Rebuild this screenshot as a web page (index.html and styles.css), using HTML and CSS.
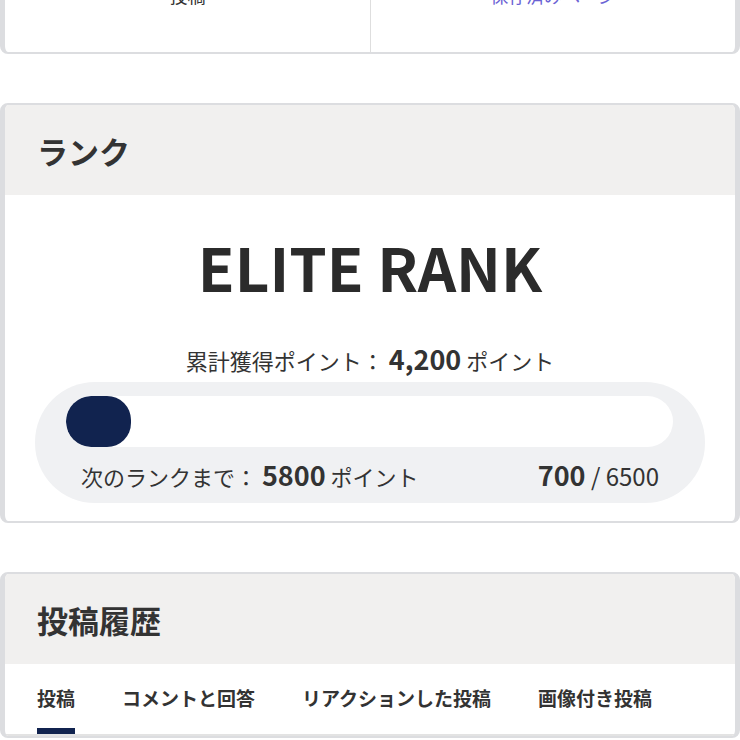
FILE: index.html
```html
<!DOCTYPE html>
<html lang="ja">
<head>
<meta charset="utf-8">
<link rel="stylesheet" href="styles.css">
</head>
<body>
<main class="page">
  <section class="card card-top">
    <div class="split">
      <div class="cell">
        <div class="cell-num">12</div>
        <div class="cell-label">投稿</div>
      </div>
      <div class="cell cell-right">
        <div class="cell-num">&nbsp;</div>
        <a class="cell-link" href="#">保存済みページ</a>
      </div>
    </div>
  </section>

  <section class="card">
    <header class="card-head"><h2>ランク</h2></header>
    <div class="rank-body">
      <div class="rank-name">ELITE RANK</div>
      <div class="rank-total">累計獲得ポイント： <b class="num">4,200</b> ポイント</div>
      <div class="progress">
        <div class="track"><div class="fill" style="width:65px"></div></div>
        <div class="labels">
          <span>次のランクまで： <b class="num">5800</b> ポイント</span>
          <span class="fraction"><b class="num">700</b> / 6500</span>
        </div>
      </div>
    </div>
  </section>

  <section class="card">
    <header class="card-head"><h2>投稿履歴</h2></header>
    <nav class="tabs">
      <a class="tab active" href="#">投稿</a>
      <a class="tab" href="#">コメントと回答</a>
      <a class="tab" href="#">リアクションした投稿</a>
      <a class="tab" href="#">画像付き投稿</a>
    </nav>
  </section>
</main>
</body>
</html>
```
FILE: styles.css
```css
* { box-sizing: border-box; }
html, body { margin: 0; padding: 0; background: #fff; }
body {
  font-family: "Noto Sans CJK JP", "Noto Sans", sans-serif;
  color: #333;
  overflow: hidden;
  height: 740px;
}
.page {
  display: flex;
  flex-direction: column;
  gap: 49px;
  margin-top: -66px;
}
.card {
  background: #fff;
  border: 2px solid #dcdde0;
  border-left-width: 5px;
  border-right-width: 5px;
  border-radius: 8px;
  overflow: hidden;
}
.split {
  display: grid;
  grid-template-columns: 1fr 1fr;
}
.cell {
  display: flex;
  flex-direction: column;
  align-items: center;
  padding: 14px 0 44px;
  font-size: 18px;
  line-height: 26px;
}
.cell-right { border-left: 1px solid #dedede; }
.cell-num { font-size: 22px; font-weight: 700; line-height: 32px; }
.cell-link { color: #6a62d4; text-decoration: none; }
.card-head {
  background: #f1f0ef;
  height: 90px;
  display: flex;
  align-items: center;
  padding: 0 32px;
}
.card-head h2 {
  margin: 0;
  font-size: 31px;
  font-weight: 700;
  color: #333;
}
.rank-body {
  padding: 33px 30px 18px;
  display: flex;
  flex-direction: column;
  align-items: center;
}
.rank-name {
  font-size: 60px;
  font-weight: 700;
  line-height: 76px;
  color: #2b2b2b;
}
.rank-total {
  margin-top: 40px;
  font-size: 22px;
  line-height: 32px;
}
.num { font-size: 27px; font-weight: 700; line-height: 1; }
.progress {
  align-self: stretch;
  margin-top: 6px;
  background: #f0f1f3;
  border-radius: 60px;
  padding: 14px 32px 11px 31px;
}
.track {
  height: 51px;
  background: #fff;
  border-radius: 26px;
  overflow: hidden;
}
.fill {
  height: 100%;
  background: #11234f;
  border-radius: 24px;
}
.labels {
  display: flex;
  justify-content: space-between;
  margin-top: 13px;
  padding: 0 14px 0 15px;
  font-size: 22px;
  line-height: 32px;
}
.fraction { font-size: 24px; }
.fraction .num { font-size: 27px; }
.tabs {
  display: flex;
  gap: 47px;
  padding: 0 32px;
  border-bottom: 2px solid #e3e3e3;
  height: 72px;
}
.tab {
  display: flex;
  align-items: center;
  padding-top: 2px;
  font-size: 19px;
  font-weight: 700;
  color: #333;
  text-decoration: none;
  border-bottom: 6px solid transparent;
}
.tab.active { border-bottom-color: #11234f; }
```
